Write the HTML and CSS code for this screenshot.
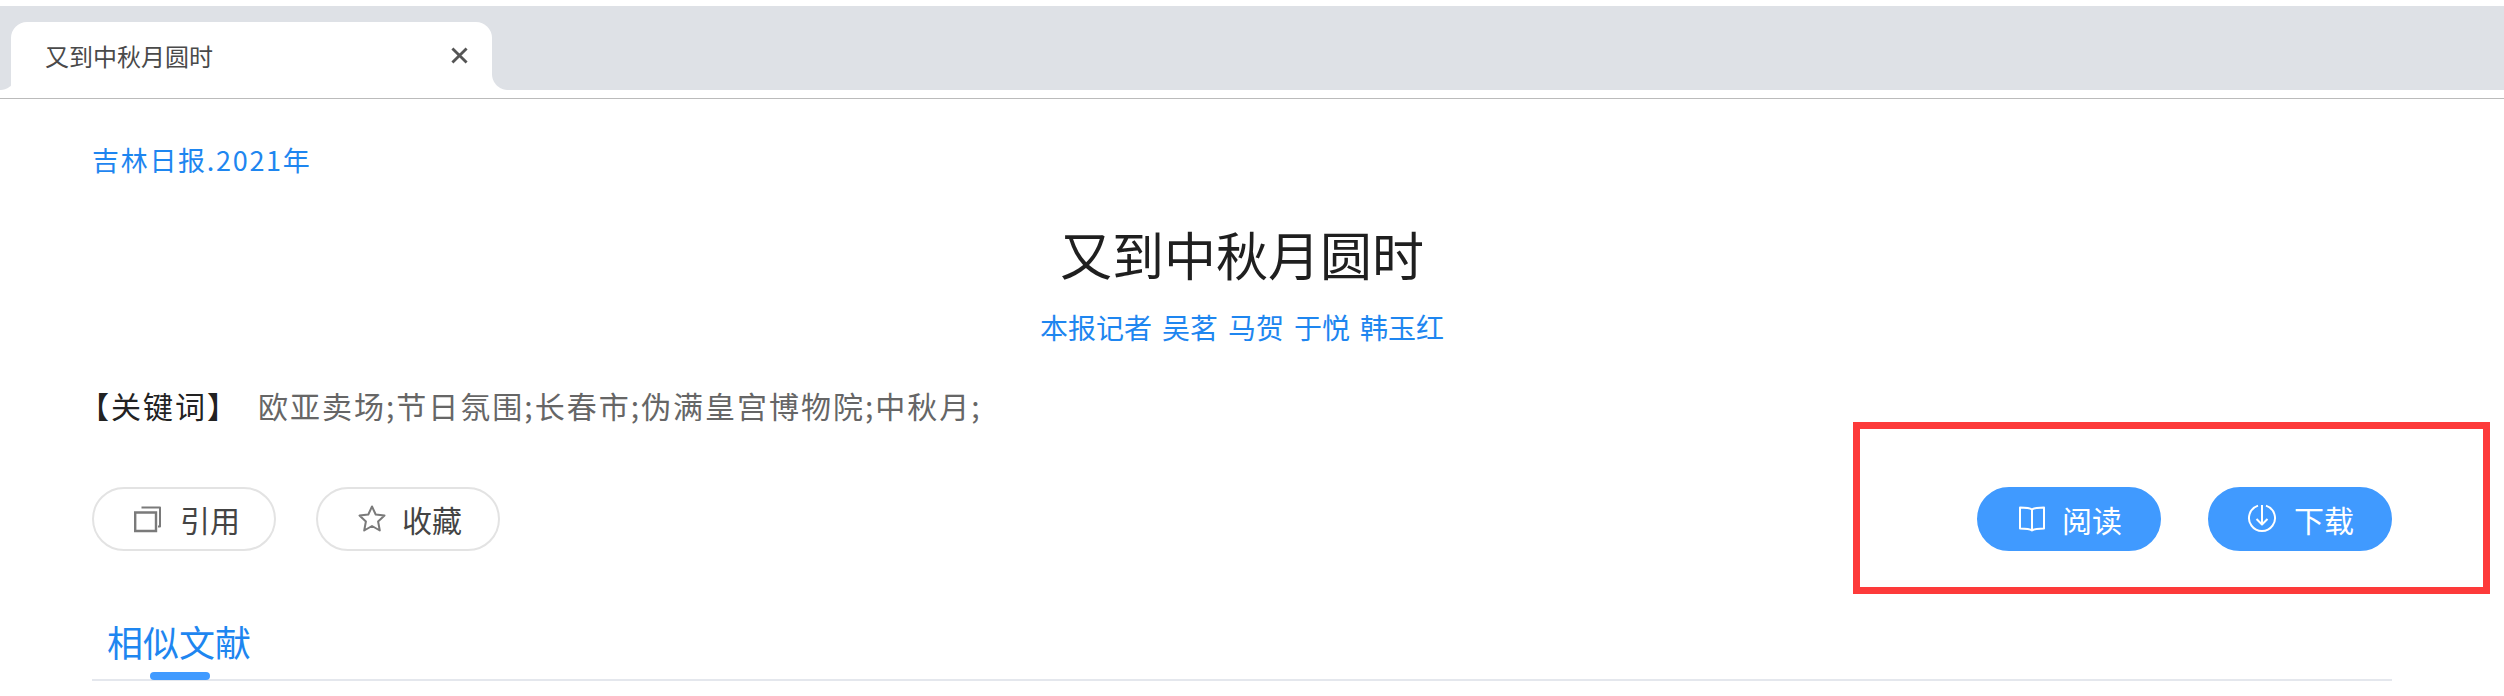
FILE: index.html
```html
<!DOCTYPE html>
<html lang="zh">
<head>
<meta charset="utf-8">
<title>又到中秋月圆时</title>
<link rel="stylesheet" href="styles.css">
</head>
<body>
<header class="chrome">
  <div class="tabstrip">
    <div class="tab">
      <span class="tab-title">又到中秋月圆时</span>
      <svg class="tab-close" viewBox="0 0 18 18"><path d="M1.500 1.500 16.500 16.500M16.500 1.500 1.500 16.500"/></svg>
    </div>
  </div>
</header>
<main class="page">
  <a class="source">吉林日报.2021年</a>
  <h1 class="title">又到中秋月圆时</h1>
  <p class="authors"><a>本报记者</a><a>吴茗</a><a>马贺</a><a>于悦</a><a>韩玉红</a></p>
  <p class="keywords"><span class="kw-label">【关键词】</span><span class="kw-values">欧亚卖场;节日氛围;长春市;伪满皇宫博物院;中秋月;</span></p>
  <div class="actions">
    <div class="action-group">
      <button class="btn btn-wide">
        <svg class="icon" viewBox="0 0 26 26"><path class="thick" d="M1.200 6.500H22V25H1.200Z"/><path d="M7.500 1.500H26V20.500H24"/></svg>
        <span>引用</span>
      </button>
      <button class="btn">
        <svg class="icon" viewBox="0 0 26 26"><path d="M14 0.500 17.700 8.500 26.500 9.600 20.100 15.500 21.800 24.500 14 20 6.200 24.500 7.900 15.500 1.500 9.600 10.300 8.500Z"/></svg>
        <span>收藏</span>
      </button>
    </div>
    <div class="action-group">
      <button class="btn btn-narrow primary">
        <svg class="icon" viewBox="0 0 26 26"><path d="M13 3.500C11 2 7 1.500 1 1.500V22.500C7 22.500 11 23 13 24.500 15 23 19 22.500 25 22.500V1.500C19 1.500 15 2 13 3.500ZM13 3.500V24.500"/></svg>
        <span>阅读</span>
      </button>
      <button class="btn btn-wide btn-left primary">
        <svg class="icon" viewBox="0 0 26 26"><path d="M10 -0.370A13 13 0 1 0 18 -0.370"/><path d="M14 -1V18.500M8.500 13 14 18.500 19.500 13"/></svg>
        <span>下载</span>
      </button>
    </div>
  </div>
  <nav class="tabs"><a class="tabs-item">相似文献</a></nav>
</main>
<div class="annotation"></div>
</body>
</html>
```
FILE: styles.css
```css
* { box-sizing: border-box; }
html, body { margin: 0; padding: 0; }
body {
  width: 2504px;
  height: 696px;
  overflow: hidden;
  background: #fff;
  position: relative;
  font-family: "Noto Sans CJK SC", "Noto Sans", sans-serif;
}
.chrome {
  height: 99px;
  padding-top: 6px;
  border-bottom: 1px solid #bbbbbb;
}
.tabstrip {
  height: 84px;
  background: #dee1e6;
  padding: 16px 0 0 11px;
}
.tab {
  position: relative;
  width: 481px;
  height: 68px;
  background: #fff;
  border-radius: 16px 16px 0 0;
  display: flex;
  align-items: center;
  justify-content: space-between;
  padding: 0 24px 2px 34px;
  color: #4a4a4a;
  font-size: 24px;
}
.tab::before, .tab::after {
  content: "";
  position: absolute;
  bottom: 0;
  height: 16px;
}
.tab::before {
  left: -11px;
  width: 11px;
  background: radial-gradient(circle at 0 0, #dee1e6 15.500px, #fff 16.500px);
}
.tab::after {
  right: -16px;
  width: 16px;
  background: radial-gradient(circle at 100% 0, #dee1e6 15.500px, #fff 16.500px);
}
.tab-close { width: 17px; height: 17px; }
.tab-close path { fill: none; stroke: #555; stroke-width: 3; }
.page {
  padding: 0 112px 0 92px;
}
.source {
  display: block;
  margin-top: 43px;
  height: 36px;
  line-height: 36px;
  font-size: 27px;
  letter-spacing: 1.700px;
  color: #1e86f0;
}
.title {
  margin: 45px 0 0;
  height: 62px;
  line-height: 62px;
  text-align: center;
  font-size: 52px;
  font-weight: 400;
  color: #1f1f1f;
}
.authors {
  margin: 22px 0 0;
  height: 40px;
  line-height: 40px;
  display: flex;
  justify-content: center;
  gap: 10px;
  font-size: 28px;
  color: #1e86f0;
}
.keywords {
  margin: 36px 0 0;
  height: 44px;
  line-height: 44px;
  font-size: 30px;
  letter-spacing: 2px;
  display: flex;
  gap: 19px;
}
.kw-label { color: #222; margin-left: -13px; white-space: nowrap; }
.kw-values { color: #666; }
.actions {
  margin-top: 60px;
  display: flex;
  justify-content: space-between;
}
.action-group { display: flex; gap: 40px; }
.action-group:last-child { gap: 47px; }
.btn {
  width: 184px;
  height: 64px;
  border: 2px solid #e3e3e3;
  border-radius: 32px;
  background: #fff;
  color: #444;
  font: inherit;
  font-size: 30px;
  display: flex;
  align-items: center;
  justify-content: flex-start;
  gap: 18px;
  padding: 0 0 0 40px;
}
.btn-wide { gap: 20px; }
.btn-narrow { gap: 17px; }
.btn-left { padding-left: 38px; }
.icon { width: 26px; height: 26px; flex: none; overflow: visible; }
.icon path { fill: none; stroke: #7a7a7a; stroke-width: 2; stroke-linejoin: round; }
.icon .thick { stroke-width: 2.400; stroke-linejoin: miter; }
.primary {
  background: #409aff;
  border-color: #409aff;
  color: #fff;
}
.primary .icon path { stroke: #fff; }
.tabs {
  margin-top: 63px;
  height: 67px;
  border-bottom: 2px solid #e4e7ed;
  padding-left: 15px;
}
.tabs-item {
  position: relative;
  display: inline-block;
  height: 65px;
  line-height: 54px;
  font-size: 36px;
  color: #1e86f0;
}
.tabs-item::after {
  content: "";
  position: absolute;
  left: 43px;
  bottom: -1px;
  width: 60px;
  height: 8px;
  background: #409aff;
  border-radius: 4px;
}
.annotation {
  position: absolute;
  left: 1853px;
  top: 422px;
  width: 637px;
  height: 172px;
  border: 7px solid #fd3a3a;
}
```
